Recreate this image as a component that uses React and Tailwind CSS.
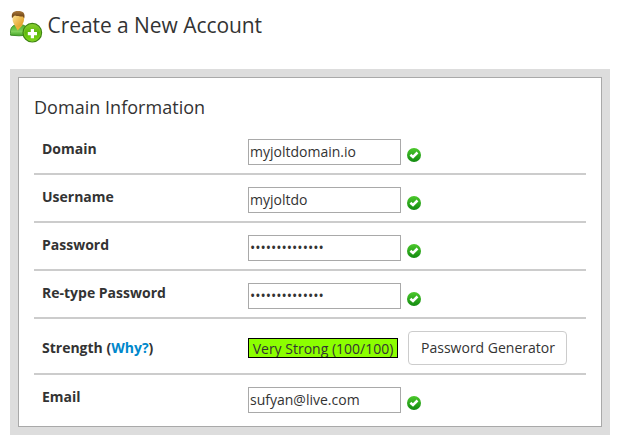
import React, { useState } from 'react';

const UserAddIcon = () => (
    <svg width="34" height="33" viewBox="0 0 34 33" className="shrink-0">
        <defs>
            <linearGradient id="hair" x1="0" y1="0" x2="0" y2="1">
                <stop offset="0" stopColor="#a9783c" />
                <stop offset="1" stopColor="#5c3308" />
            </linearGradient>
            <linearGradient id="skin" x1="0" y1="0" x2="1" y2="1">
                <stop offset="0" stopColor="#ffe69a" />
                <stop offset="1" stopColor="#dc9414" />
            </linearGradient>
            <linearGradient id="shirt" x1="0" y1="0" x2="0" y2="1">
                <stop offset="0" stopColor="#4fae2c" />
                <stop offset="0.6" stopColor="#7fd05a" />
                <stop offset="1" stopColor="#43a324" />
            </linearGradient>
            <linearGradient id="plus" x1="0" y1="0" x2="0" y2="1">
                <stop offset="0" stopColor="#8ccf30" />
                <stop offset="0.5" stopColor="#5cb80a" />
                <stop offset="1" stopColor="#80dc14" />
            </linearGradient>
        </defs>
        <path d="M0.6 25.2C0 20.5 .8 17 4 15.4L13 15C16.5 16.2 18 18.5 17.5 25.2Q9 26.4 0.6 25.2Z" fill="url(#shirt)" stroke="#3a8a24" strokeWidth="0.9" />
        <path d="M4.2 14.6L7.6 20.4L13.2 14.6Z" fill="#eeb03a" />
        <path d="M2.6 5C2.8 3 13.8 3 14 5V9.5C13.8 13.5 11 16.8 8.3 16.8C5.4 16.8 2.8 13.5 2.6 9.5Z" fill="url(#skin)" />
        <path d="M2 8.2C1 3.4 3 1 8 1C13.4 1 15.4 3.4 14.2 8.6L13 6.4C10 6.8 6.5 6.2 4.8 5.6L3.2 6.8Z" fill="url(#hair)" />
        <circle cx="22.3" cy="22.7" r="9.3" fill="url(#plus)" stroke="#3f8412" strokeWidth="1.2" />
        <circle cx="22.3" cy="22.7" r="8.2" fill="none" stroke="#7cc92c" strokeWidth="0.7" />
        <path d="M20.8 19H24V22H27V25.2H24V28.2H20.8V25.2H17.8V22H20.8Z" fill="#fff" />
    </svg>
);

const ValidIcon = () => (
    <svg width="14" height="14" viewBox="0 0 14 14" className="ml-1.5 mt-[9px] shrink-0">
        <defs>
            <linearGradient id="valid" x1="0" y1="0" x2="0" y2="1">
                <stop offset="0" stopColor="#4cc92c" />
                <stop offset="1" stopColor="#128a10" />
            </linearGradient>
        </defs>
        <circle cx="7" cy="7" r="7" fill="url(#valid)" />
        <path d="M3.4 6.7L6 9L10.5 4.5" fill="none" stroke="#fff" strokeWidth="2.5" />
    </svg>
);

const fields = [
    { label: 'Domain', name: 'domain', type: 'text' },
    { label: 'Username', name: 'username', type: 'text' },
    { label: 'Password', name: 'password', type: 'password' },
    { label: 'Re-type Password', name: 'password2', type: 'password' }
];

const Field = ({ label, name, type, value, onChange }) => (
    <>
        <label htmlFor={name} className="w-[206px] pt-3 font-bold leading-5">{label}</label>
        <input id={name} type={type} className="mt-3 w-[153px] h-[26px] border border-[#a9a9a9] bg-white px-px pb-0.5 outline-none" value={value} onChange={onChange} />
    </>
);

const App = () => {
    const [formData, setFormData] = useState({
        domain: 'myjoltdomain.io',
        username: 'myjoltdo',
        password: 'joltpassword12',
        password2: 'joltpassword12',
        email: 'sufyan@live.com'
    });

    const handleChange = (e) => setFormData({ ...formData, [e.target.id]: e.target.value });

    return (
        <div className="h-[446px] bg-white pl-2.5 pt-2.5 text-sm text-[#333] font-['Open_Sans',sans-serif]">
            <div className="flex h-[59px] gap-[3.5px]">
                <UserAddIcon />
                <h1 className="text-[21px] leading-[30px] tracking-[-0.06px]">Create a New Account</h1>
            </div>

            <div className="w-[600px] h-[366px] border-8 border-[#ddd]">
                <form className="h-full border border-[#a9a9a9] px-[15px]">
                    <h2 className="h-[49px] pt-[17px] text-lg leading-6 tracking-[0.03px]">Domain Information</h2>

                    {fields.map(field => (
                        <div key={field.name} className="flex items-start h-12 border-b-2 border-[#ccc] pl-2">
                            <Field {...field} value={formData[field.name]} onChange={handleChange} />
                            <div className="pt-3"><ValidIcon /></div>
                        </div>
                    ))}

                    <div className="flex items-center h-14 border-b-2 border-[#ccc] pl-2">
                        <div className="w-[206px] pt-1 font-bold leading-5">Strength (<a href="#" className="text-[#08c]">Why?</a>)</div>
                        <div className="mt-[3px] w-[150px] h-5 overflow-hidden border border-black bg-[#8cff00] text-center leading-5">Very Strong (100/100)</div>
                        <button type="button" className="ml-2.5 mt-1 w-[159px] h-[34px] rounded border border-[#ccc] bg-white pl-px">Password Generator</button>
                    </div>

                    <div className="flex items-start pl-2">
                        <Field label="Email" name="email" type="text" value={formData.email} onChange={handleChange} />
                        <div className="pt-3"><ValidIcon /></div>
                    </div>
                </form>
            </div>
        </div>
    );
};

export default App;
